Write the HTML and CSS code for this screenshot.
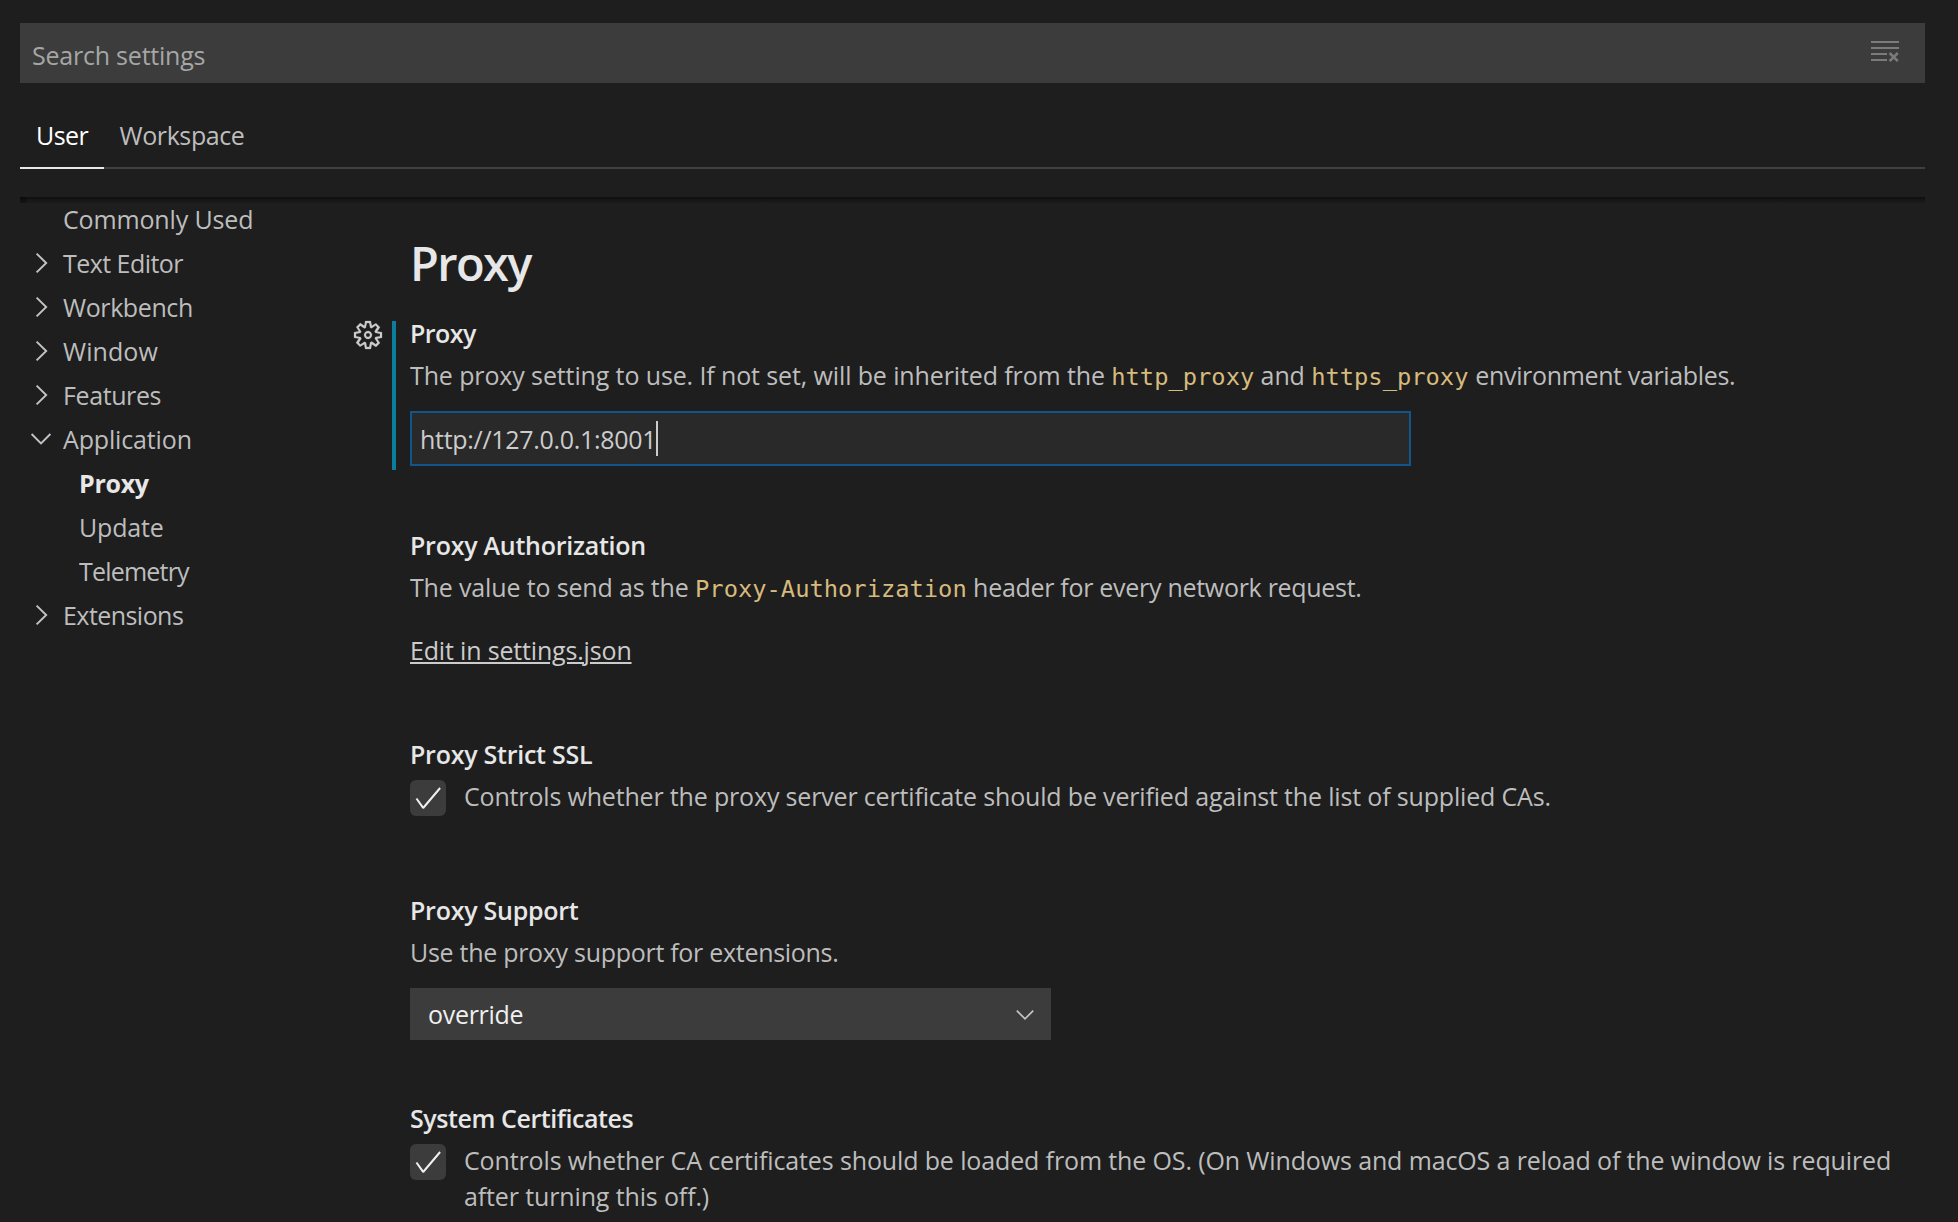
FILE: index.html
```html
<!DOCTYPE html>
<html lang="en">
<head>
<meta charset="utf-8">
<title>Settings</title>
<link rel="stylesheet" href="styles.css">
</head>
<body>
<svg width="0" height="0" class="defs" aria-hidden="true">
  <symbol id="chevron-right" viewBox="0 0 32 32"><path d="M11.6 6.6 21.2 16 11.6 25.4"/></symbol>
  <symbol id="chevron-down" viewBox="0 0 32 32"><path d="M6.6 11 16 20.4 25.4 11"/></symbol>
  <symbol id="check" viewBox="0 0 16 16"><path d="M14.431 3.323l-8.47 10-.79-.036-3.35-4.77.818-.574 2.978 4.24 8.051-9.506.764.646z"/></symbol>
</svg>
<div class="editor">
  <header>
    <div class="search">
      <span class="placeholder">Search settings</span>
      <svg class="clear" width="32" height="32" viewBox="0 0 32 32"><path d="M2 5h28v2H2zM2 11h28v2H2zM2 17h16v2H2zM2 23h16v2H2z"/><path class="cross" d="M20.6 17 28.8 25.2M28.8 17 20.6 25.2"/></svg>
    </div>
    <nav class="tabs">
      <a class="tab active">User</a>
      <a class="tab workspace">Workspace</a>
    </nav>
  </header>
  <div class="body">
    <div class="shadow"></div>
    <ul class="toc">
      <li><span class="twistie"></span><span>Commonly Used</span></li>
      <li><svg class="twistie"><use href="#chevron-right"/></svg><span class="tight">Text Editor</span></li>
      <li><svg class="twistie"><use href="#chevron-right"/></svg><span class="snug">Workbench</span></li>
      <li><svg class="twistie"><use href="#chevron-right"/></svg><span class="loose">Window</span></li>
      <li><svg class="twistie"><use href="#chevron-right"/></svg><span class="snug">Features</span></li>
      <li><svg class="twistie"><use href="#chevron-down"/></svg><span>Application</span></li>
      <li class="child selected"><span>Proxy</span></li>
      <li class="child"><span>Update</span></li>
      <li class="child"><span class="tightest">Telemetry</span></li>
      <li><svg class="twistie"><use href="#chevron-right"/></svg><span class="tight">Extensions</span></li>
    </ul>
    <main>
      <h1>Proxy</h1>
      <section class="setting modified">
        <svg class="gear" width="32" height="32" viewBox="0 0 16 16"><path fill-rule="evenodd" d="M9.1 4.4L8.6 2H7.4l-.5 2.4-.7.3-2-1.3-.9.8 1.3 2-.2.7-2.4.5v1.2l2.4.5.3.8-1.3 2 .8.8 2-1.3.8.3.4 2.3h1.2l.5-2.4.8-.3 2 1.3.8-.8-1.3-2 .3-.8 2.3-.4V7.4l-2.4-.5-.3-.8 1.3-2-.8-.8-2 1.3-.7-.2zM9.4 1l.5 2.4L12 2.1l2 2-1.4 2.1 2.4.4v2.8l-2.4.5L14 12l-2 2-2.1-1.4-.5 2.4H6.6l-.5-2.4L4 13.9l-2-2 1.4-2.1L1 9.4V6.6l2.4-.5L2.1 4l2-2 2.1 1.4.4-2.4h2.8zm.6 7c0 1.1-.9 2-2 2s-2-.9-2-2 .9-2 2-2 2 .9 2 2zM8 9c.6 0 1-.4 1-1s-.4-1-1-1-1 .4-1 1 .4 1 1 1z"/></svg>
        <h2 class="single">Proxy</h2>
        <p class="intro">The proxy setting to use. If not set, will be inherited from the <code>http_proxy</code> and <code>https_proxy</code> <span class="snug">environment variables.</span></p>
        <div class="input">http://127.0.0.1:8001<i class="caret"></i></div>
      </section>
      <section class="setting auth">
        <h2>Proxy Authorization</h2>
        <p>The value to send as the <code>Proxy-Authorization</code> <span class="request">header for every network request.</span></p>
        <a class="link">Edit in settings.json</a>
      </section>
      <section class="setting ssl">
        <h2>Proxy Strict SSL</h2>
        <div class="check-row">
          <span class="checkbox"><svg width="32" height="32"><use href="#check"/></svg></span>
          <p class="verify">Controls whether the proxy server certificate should be verified against the list of supplied CAs.</p>
        </div>
      </section>
      <section class="setting support">
        <h2>Proxy Support</h2>
        <p class="request">Use the proxy support for extensions.</p>
        <div class="select"><span>override</span><svg class="arrow"><use href="#chevron-down"/></svg></div>
      </section>
      <section class="setting certificates">
        <h2>System Certificates</h2>
        <div class="check-row">
          <span class="checkbox"><svg width="32" height="32"><use href="#check"/></svg></span>
          <p class="wide">Controls whether CA certificates should be loaded from the OS. (On Windows and macOS a reload of the window is required<br>after turning this off.)</p>
        </div>
      </section>
    </main>
  </div>
</div>
</body>
</html>
```
FILE: styles.css
```css
* { box-sizing: border-box; }

body {
  margin: 0;
  height: 1222px;
  overflow: hidden;
  background: #1e1e1e;
  color: #bdbdbd;
  font: 25px/36px "Open Sans", "Noto Sans", sans-serif;
  letter-spacing: -0.15px;
}

h1, h2, p, ul { margin: 0; padding: 0; font-size: 25px; }
.defs { position: absolute; }
symbol path, .twistie, .arrow { fill: none; stroke: #c5c5c5; stroke-width: 1.9; }
#check path { fill: #f0f0f0; stroke: none; }

.editor { padding: 23px 33px 0 20px; }

.search {
  display: flex;
  justify-content: space-between;
  height: 60px;
  padding: 15px 24px 0 12px;
  background: #3c3c3c;
}
.placeholder { color: #a6a6a6; line-height: 34px; letter-spacing: -0.22px; }
.clear { margin-top: -2px; fill: #7b7b7b; }
.cross { fill: none; stroke: #7b7b7b; stroke-width: 2.6; }

.tabs {
  display: flex;
  padding-top: 30px;
  box-shadow: inset 0 -2px #404040;
}
.tab { padding: 0 16px 10px; line-height: 44px; border-bottom: 2px solid transparent; }
.active { width: 84px; color: #ffffff; border-color: #e7e7e7; letter-spacing: -0.6px; }
.workspace { padding-left: 15.5px; letter-spacing: -0.4px; }

.body {
  position: relative;
  display: grid;
  grid-template-columns: 372px 1fr;
  margin-top: 28px;
}
.shadow {
  position: absolute;
  inset: 0 0 auto 0;
  height: 6px;
  background:
    linear-gradient(#0a0a0a, #151515) 0 0 / 6px 6px no-repeat,
    linear-gradient(#101010, #1b1b1b);
}

.toc { list-style: none; }
.toc li { display: flex; align-items: center; height: 44px; line-height: 44px; padding-left: 5px; }
.twistie { width: 32px; height: 32px; margin-right: 6px; }
.toc .child { padding-left: 59px; }
.selected { color: #e7e7e7; font-weight: 700; }
.selected span { letter-spacing: -0.3px; }
.loose { letter-spacing: 0.08px; }
.snug { letter-spacing: -0.4px; }
.tight { letter-spacing: -0.55px; }
.tightest { letter-spacing: -0.8px; }

main { padding-top: 34px; }
h1 {
  padding-left: 18px;
  color: #e7e7e7;
  font-size: 47px;
  line-height: 64px;
  font-weight: 600;
  letter-spacing: -1.6px;
}
h2 { color: #e7e7e7; font-weight: 600; line-height: 24px; margin-bottom: 12px; letter-spacing: -0.25px; }
.single { letter-spacing: -0.55px; }
.certificates h2 { letter-spacing: -0.42px; }

.setting { position: relative; padding-left: 18px; }
.modified {
  margin-top: 26px;
  padding: 0 0 4px 14px;
  border-left: 4px solid #0c7d9d;
}
.intro { letter-spacing: -0.12px; }
.intro .snug { margin-left: 0.5px; letter-spacing: -0.35px; }
.gear { position: absolute; left: -44px; top: -2px; fill: #cccccc; stroke: #cccccc; stroke-width: 0.12px; }
code {
  color: #d7ba7d;
  font: 23.75px/0 "DejaVu Sans Mono", monospace;
  letter-spacing: 0;
}
.input {
  display: flex;
  align-items: center;
  width: 1001px;
  height: 55px;
  margin-top: 18px;
  padding: 0 8px;
  border: 2px solid #11568a;
  background: #292929;
  color: #cccccc;
  letter-spacing: -0.3px;
}
.caret { width: 2px; height: 35px; margin-top: -1px; background: #cccccc; }

.auth { margin-top: 63px; }
.request { letter-spacing: -0.29px; }
.link {
  display: block;
  width: max-content;
  margin-top: 27px;
  color: #cccccc;
  letter-spacing: -0.17px;
  text-decoration: underline 2px;
  text-underline-offset: 2px;
}

.ssl { margin-top: 74px; }
.check-row { display: flex; gap: 18px; }
.checkbox {
  display: grid;
  place-items: center;
  flex: none;
  width: 36px;
  height: 36px;
  margin-top: 2px;
  border-radius: 6px;
  background: #3c3c3c;
}
.verify { letter-spacing: -0.17px; }
.wide { white-space: nowrap; letter-spacing: -0.13px; }

.support { margin-top: 82px; }
.select {
  display: flex;
  align-items: center;
  justify-content: space-between;
  width: 641px;
  height: 52px;
  margin-top: 18px;
  padding: 0 12px 0 18px;
  background: #3c3c3c;
  color: #f0f0f0;
  letter-spacing: -0.3px;
}
.arrow { width: 28px; height: 28px; margin-top: 1px; stroke-width: 2.2; }
.certificates { margin-top: 66px; }
```
